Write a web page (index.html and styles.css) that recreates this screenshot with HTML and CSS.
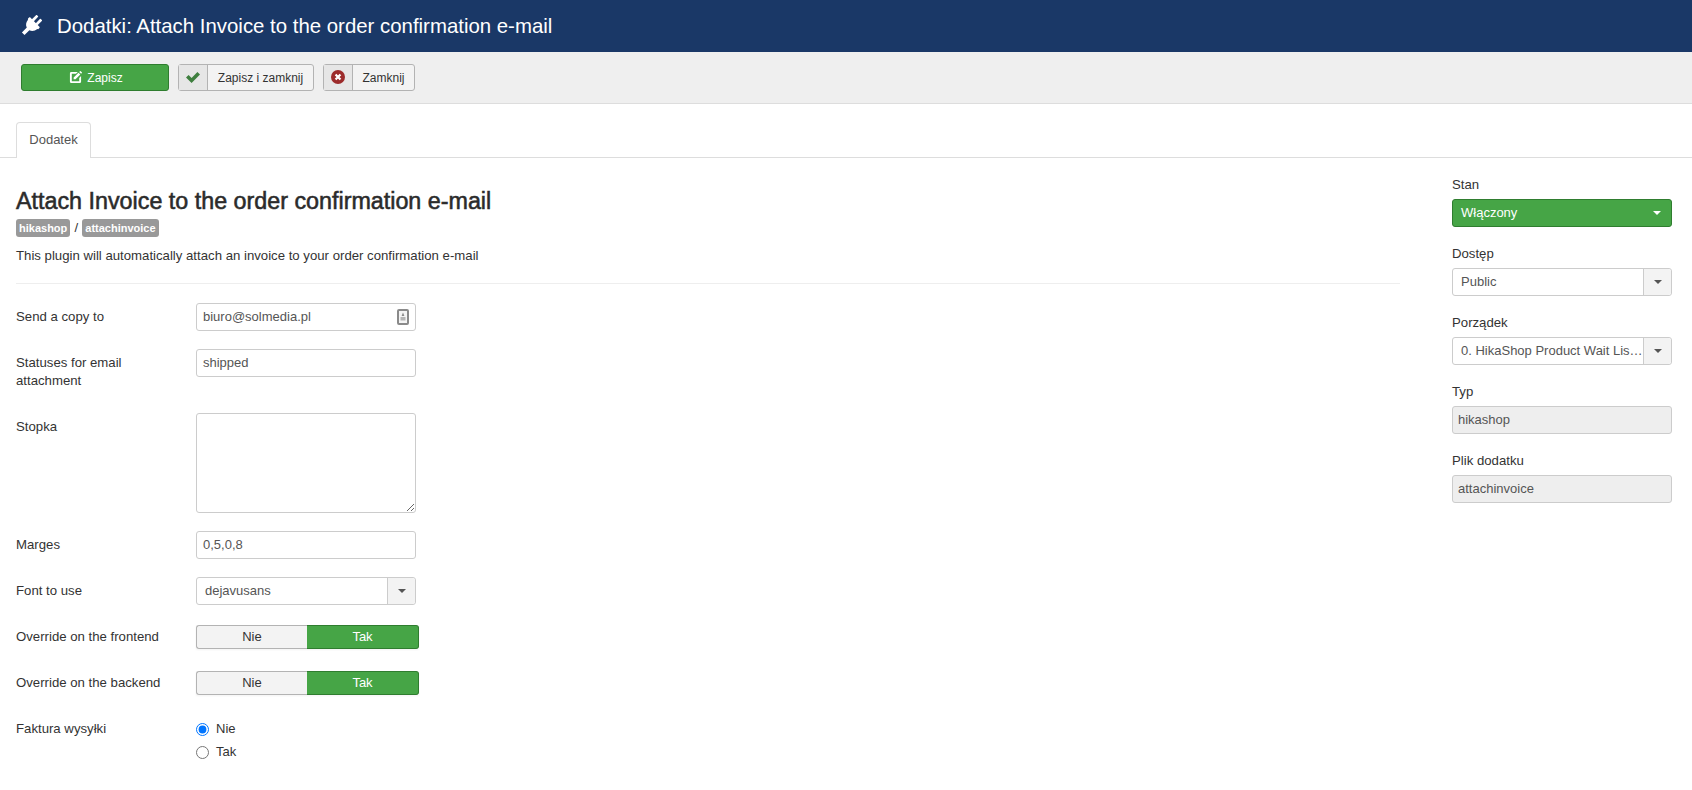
FILE: index.html
```html
<!DOCTYPE html>
<html lang="pl">
<head>
<meta charset="utf-8">
<title>Dodatki: Attach Invoice to the order confirmation e-mail</title>
<link rel="stylesheet" href="styles.css">
</head>
<body>
<header class="topbar">
  <svg class="plug" viewBox="0 0 24 24" width="22" height="22"><g transform="rotate(45 12 12)" fill="#fff"><rect x="7.500" y="-1" width="3" height="7.500" rx=".8"/><rect x="13.500" y="-1" width="3" height="7.500" rx=".8"/><path d="M5 6h14c.6 0 1 .4 1 1v1.500c0 .5-.4.8-.8.9-.3 3.600-2.400 6.200-5.200 7.100v7.500h-4v-7.500c-2.800-.9-4.900-3.500-5.200-7.100-.4-.1-.8-.4-.8-.9V7c0-.6.4-1 1-1z"/></g></svg>
  <h1 class="page-title">Dodatki: Attach Invoice to the order confirmation e-mail</h1>
</header>
<nav class="toolbar">
  <button class="btn btn-save" type="button">
    <svg viewBox="0 0 14 14" width="13" height="13"><path fill="#fff" d="M2.500 1H9.500L7.500 3H3v8h8V7.500l2-2V11.500A1.500 1.500 0 0 1 11.500 13h-9A1.500 1.500 0 0 1 1 11.500v-9A1.500 1.500 0 0 1 2.500 1z"/><path fill="#fff" d="M5 7l5.200-5.200 2 2L7 9H5zM11 1l.8-.8a.6.6 0 0 1 .8 0l1.200 1.200a.6.6 0 0 1 0 .8l-.8.8z"/></svg>
    <span class="save-txt">Zapisz</span>
  </button>
  <button class="btn btn-icon btn-wide" type="button">
    <span class="btn-ico"><svg viewBox="0 0 16 16" width="16" height="16"><path fill="#3f7f3f" d="M1 8.500l2.600-2.600 3 3L12.400 3 15 5.600l-8.400 8.400z"/></svg></span>
    <span class="btn-txt">Zapisz i zamknij</span>
  </button>
  <button class="btn btn-icon btn-narrow" type="button">
    <span class="btn-ico"><svg viewBox="0 0 16 16" width="14" height="14"><circle cx="8" cy="8" r="8" fill="#9c2b2b"/><path stroke="#fff" stroke-width="2.600" d="M5.200 5.200l5.600 5.600M10.800 5.200l-5.600 5.600"/></svg></span>
    <span class="btn-txt">Zamknij</span>
  </button>
</nav>
<div class="tabs"><span class="tab">Dodatek</span></div>
<main class="layout">
  <section class="content">
    <h2 class="plugin-title">Attach Invoice to the order confirmation e-mail</h2>
    <div class="crumbs"><span class="badge">hikashop</span><span class="slash">/</span><span class="badge">attachinvoice</span></div>
    <p class="desc">This plugin will automatically attach an invoice to your order confirmation e-mail</p>
    <hr class="rule">
    <div class="row"><label class="lbl">Send a copy to</label>
      <div class="field input">biuro@solmedia.pl
        <svg class="card" viewBox="0 0 12 16" width="12" height="16"><rect x="1" y="1" width="10" height="14" rx="1" fill="#f4f4f4" stroke="#8a8a8a" stroke-width="2"/><path fill="#8a8a8a" d="M6 3.500l1.400 3.500H4.600z"/><path fill="#b5b5b5" d="M3.500 8h5v3.500h-5z"/></svg>
      </div></div>
    <div class="row row-tall"><label class="lbl">Statuses for email attachment</label><div class="field input">shipped</div></div>
    <div class="row"><label class="lbl">Stopka</label><textarea class="field area"></textarea></div>
    <div class="row"><label class="lbl">Marges</label><div class="field input">0,5,0,8</div></div>
    <div class="row row-font"><label class="lbl">Font to use</label><div class="field chosen"><span class="chosen-val">dejavusans</span><span class="chosen-arrow"><i class="caret"></i></span></div></div>
    <div class="row row-toggle"><label class="lbl">Override on the frontend</label><div class="toggle"><span class="off">Nie</span><span class="on">Tak</span></div></div>
    <div class="row row-toggle row-toggle2"><label class="lbl">Override on the backend</label><div class="toggle"><span class="off">Nie</span><span class="on">Tak</span></div></div>
    <div class="row row-radio"><label class="lbl">Faktura wysyłki</label>
      <div class="radios">
        <label class="radio"><input type="radio" name="f" checked>Nie</label>
        <label class="radio"><input type="radio" name="f">Tak</label>
      </div></div>
  </section>
  <aside class="side">
    <div class="side-item"><label class="side-lbl">Stan</label><div class="field chosen-green"><span>Włączony</span><i class="caret caret-white"></i></div></div>
    <div class="side-item"><label class="side-lbl">Dostęp</label><div class="field chosen"><span class="chosen-val">Public</span><span class="chosen-arrow"><i class="caret"></i></span></div></div>
    <div class="side-item"><label class="side-lbl">Porządek</label><div class="field chosen"><span class="chosen-val">0. HikaShop Product Wait Lis…</span><span class="chosen-arrow"><i class="caret"></i></span></div></div>
    <div class="side-item"><label class="side-lbl">Typ</label><div class="field input readonly">hikashop</div></div>
    <div class="side-item"><label class="side-lbl">Plik dodatku</label><div class="field input readonly">attachinvoice</div></div>
  </aside>
</main>
</body>
</html>
```
FILE: styles.css
```css
* { box-sizing: border-box; }
html, body { margin: 0; padding: 0; height: 100%; overflow: hidden; }
body { background: #fff; color: #333; font: 13.2px/18px "Liberation Sans", Arial, sans-serif; }

.topbar { height: 52px; background: #1a3867; display: flex; align-items: center; padding-left: 20px; gap: 15px; }
.plug { flex: none; }
.page-title { margin: 0; color: #fff; font-size: 20.4px; font-weight: 400; line-height: 52px; }

.toolbar { height: 52px; background: #efefef; border-bottom: 1px solid #ddd; display: flex; align-items: flex-start; padding: 12px 0 0 21px; gap: 9px; }
.btn { height: 27px; margin: 0; padding: 0; border-radius: 3px; font: 12px/25px "Liberation Sans", Arial, sans-serif; display: flex; align-items: stretch; }
.btn-save { width: 148px; background: #46a546; border: 1px solid #2f7d2f; color: #fff; justify-content: center; align-items: center; gap: 5px; padding-left: 2px; }
.save-txt { padding-top: 1px; }
.btn-icon { background: #f3f3f3; border: 1px solid #b3b3b3; color: #333; }
.btn-wide { width: 136px; }
.btn-narrow { width: 92px; }
.btn-ico { width: 29px; flex: none; background: #e6e6e6; border-right: 1px solid #b3b3b3; display: flex; align-items: center; justify-content: center; padding-bottom: 2px; }
.btn-txt { flex: 1; text-align: center; padding-top: 1px; }

.tabs { height: 54px; padding: 18px 0 0 16px; border-bottom: 1px solid #ddd; display: flex; }
.tab { height: 36px; width: 75px; background: #fff; border: 1px solid #ddd; border-bottom: 0; border-radius: 4px 4px 0 0; color: #555; text-align: center; line-height: 34px; font-size: 13px; }

.layout { display: grid; grid-template-columns: 1384px 220px; column-gap: 52px; padding: 0 0 0 16px; }
.content { padding-top: 27px; }
.plugin-title { margin: 0; font-size: 23.3px; line-height: 32px; font-weight: 400; color: #2b2b2b; -webkit-text-stroke: .55px #2b2b2b; }
.crumbs { display: flex; align-items: center; height: 18px; margin-top: 2px; }
.badge { background: #999; color: #fff; font-size: 11px; font-weight: 700; line-height: 18px; padding: 0 3px; border-radius: 3px; }
.slash { width: 12px; text-align: center; }
.desc { margin: 10px 0 0; }
.rule { margin: 18px 0 19px; border: 0; border-top: 1px solid #eee; }

.row { display: flex; margin-bottom: 18px; }
.lbl { flex: none; width: 180px; padding: 5px 20px 0 0; }
.row-tall { margin-bottom: 23px; }
.field { border: 1px solid #ccc; border-radius: 3px; height: 28px; width: 220px; background: #fff; color: #555; font-size: 13px; }
.input { padding: 0 6px; line-height: 26px; display: flex; justify-content: space-between; align-items: center; }
.card { flex: none; }
.area { display: block; height: 100px; resize: both; margin: 0; font: inherit; }
.chosen { display: flex; line-height: 26px; }
.chosen-val { flex: 1; min-width: 0; padding-left: 8px; white-space: nowrap; }
.chosen-arrow { flex: none; width: 28px; background: #f3f3f3; border-left: 1px solid #ccc; border-radius: 0 3px 3px 0; display: flex; align-items: center; justify-content: center; }
.caret { width: 0; height: 0; border: 4px solid transparent; border-top-color: #555; border-bottom-width: 0; }
.caret-white { border-top-color: #fff; }
.chosen-green { background: #46a546; border-color: #2f7d2f; color: #fff; display: flex; align-items: center; justify-content: space-between; padding: 0 10px 0 8px; }

.row-font { margin-bottom: 20px; }
.row-toggle { margin-bottom: 22px; }
.row-toggle .lbl { padding-top: 3px; }
.toggle { display: flex; width: 223px; height: 24px; line-height: 22px; text-align: center; box-shadow: 0 1px 2px rgba(0,0,0,.05); font-size: 13px; }
.off { width: 111px; background: #f3f3f3; border: 1px solid #b3b3b3; border-right: 0; border-radius: 3px 0 0 3px; color: #333; }
.on { width: 112px; background: #46a546; border: 1px solid #2f7d2f; border-left: 0; border-radius: 0 3px 3px 0; color: #fff; }
.row-toggle2 { margin-bottom: 25px; }
.row-radio .lbl { padding-top: 0; }
.radios { display: flex; flex-direction: column; gap: 5px; }
.radio { display: flex; align-items: center; height: 18px; gap: 7px; font-size: 13px; }
.radio input { margin: 1px 0 0; width: 13px; height: 13px; flex: none; }

.side { padding-top: 18px; }
.side-item { margin-bottom: 18px; }
.side-lbl { display: block; height: 18px; margin-bottom: 5px; line-height: 18px; }
.side-item .field { width: 220px; }
.readonly { background: #eee; padding: 0 5px; }
```
